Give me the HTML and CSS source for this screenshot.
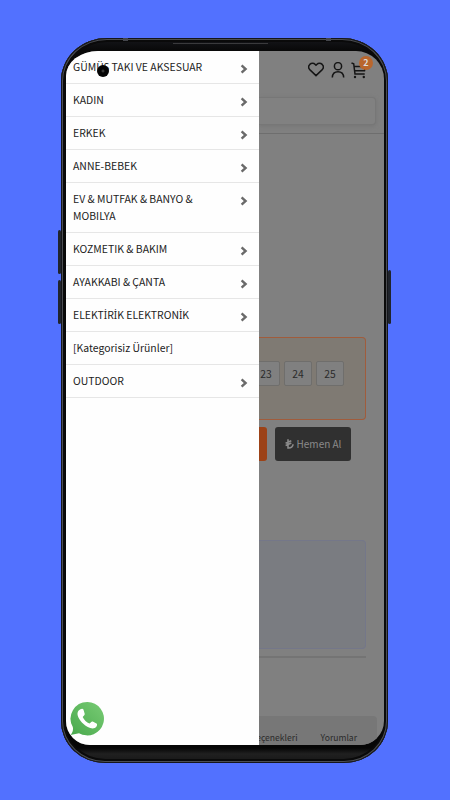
FILE: index.html
```html
<!DOCTYPE html>
<html lang="tr">

<head>
    <meta charset="UTF-8">
    <meta name="viewport" content="width=device-width, initial-scale=1.0">
    <title>Kategoriler</title>
    <link rel="stylesheet" href="styles.css">
</head>

<body>
    <div class="phone">
        <i class="key vol-up"></i>
        <i class="key vol-down"></i>
        <i class="key power"></i>
        <i class="speaker"></i>
        <i class="antenna a1"></i>
        <i class="antenna a2"></i>
        <div class="screen">
            <!-- menü -->
            <ul class="menu">
                <li><span>GÜMÜ<b class="tr">Ş</b> TAKI VE AKSESUAR</span><svg class="arrow" viewBox="0 0 8 10"><path d="M1.6 1.3 5.6 5 1.6 8.7"/></svg></li>
                <li><span>KADIN</span><svg class="arrow" viewBox="0 0 8 10"><path d="M1.6 1.3 5.6 5 1.6 8.7"/></svg></li>
                <li><span>ERKEK</span><svg class="arrow" viewBox="0 0 8 10"><path d="M1.6 1.3 5.6 5 1.6 8.7"/></svg></li>
                <li><span>ANNE-BEBEK</span><svg class="arrow" viewBox="0 0 8 10"><path d="M1.6 1.3 5.6 5 1.6 8.7"/></svg></li>
                <li><span>EV &amp; MUTFAK &amp; BANYO &amp; MOBILYA</span><svg class="arrow" viewBox="0 0 8 10"><path d="M1.6 1.3 5.6 5 1.6 8.7"/></svg></li>
                <li><span>KOZMETIK &amp; BAKIM</span><svg class="arrow" viewBox="0 0 8 10"><path d="M1.6 1.3 5.6 5 1.6 8.7"/></svg></li>
                <li><span>AYAKKABI &amp; ÇANTA</span><svg class="arrow" viewBox="0 0 8 10"><path d="M1.6 1.3 5.6 5 1.6 8.7"/></svg></li>
                <li><span>ELEKT<b class="tr">İ</b>R<b class="tr">İ</b>K ELEKTRON<b class="tr">İ</b>K</span><svg class="arrow" viewBox="0 0 8 10"><path d="M1.6 1.3 5.6 5 1.6 8.7"/></svg></li>
                <li><span>[Kategorisiz Ürünler]</span></li>
                <li><span>OUTDOOR</span><svg class="arrow" viewBox="0 0 8 10"><path d="M1.6 1.3 5.6 5 1.6 8.7"/></svg></li>
            </ul>

            <!-- arkadaki sayfa -->
            <div class="page">
                <div class="header">
                    <div class="icons">
                        <svg width="16" height="15" viewBox="0 0 16 15"><path d="M8 13.6 2 7.9C.4 6.3.4 3.9 1.8 2.4 3.3.9 5.8.9 7.2 2.4L8 3.2 8.8 2.4C10.2.9 12.7.9 14.2 2.4 15.6 3.9 15.6 6.3 14 7.9Z"/></svg>
                        <svg width="14" height="17" viewBox="0 0 14 17"><circle cx="7" cy="4.2" r="3.6"/><path d="M1.3 15.5C1.5 11.8 3.5 9.8 7 9.8S12.500 11.8 12.7 15.5"/></svg>
                        <div class="cart">
                            <svg width="16" height="17" viewBox="0 0 16 17"><path d="M.5 1 2.7 1.7 4 12H13.7M3.2 4.500H14.5L13.5 8.8H3.8"/><circle class="dot" cx="4" cy="15" r="1.2"/><circle class="dot" cx="12.8" cy="15" r="1.2"/></svg>
                            <b class="badge">2</b>
                        </div>
                    </div>
                    <div class="search"></div>
                </div>
                <div class="sizes">
                    <span>23</span>
                    <span>24</span>
                    <span>25</span>
                </div>
                <div class="buttons">
                    <div class="add"></div>
                    <div class="buy">
                        <svg width="9" height="10" viewBox="0 0 9 10"><path d="M3 .3V9C6 9.3 8 7.8 8 5.2M.6 4.2 6.3 1.8M.6 6.5 6.3 4.1"/></svg>
                        Hemen Al
                    </div>
                </div>
                <div class="info"></div>
                <div class="line"></div>
                <div class="tabs">
                    <span>Seçenekleri</span>
                    <span>Yorumlar</span>
                </div>
            </div>

            <i class="camera"></i>
            <svg class="whatsapp" viewBox="0 0 36 36">
                <defs>
                    <linearGradient id="wa" x1="0" y1="1" x2="1" y2="0">
                        <stop offset="0" stop-color="#48a84c"/>
                        <stop offset="1" stop-color="#79cc75"/>
                    </linearGradient>
                </defs>
                <path fill="url(#wa)" d="M18.5 1A16.7 16.7 0 1 1 10 32.2L1.5 34C4 31 4.3 28.5 3.8 26A16.7 16.7 0 0 1 18.5 1Z"/>
                <path fill="#fff" d="M12.5 8C14 7.5 14.5 8.5 14.8 9.7L15.7 12.8C16 14.1 14.3 15 13.7 16 15 19 17.5 21.3 20.5 22.5 21.7 21.8 22.5 20.2 23.7 20.6L27.5 22.4C29 23.3 27.3 26.4 25.7 27.1 22.5 28.5 17.5 26 14 22.5 10.5 19 7.5 14.3 8.8 11 9.5 9.3 11 8.3 12.5 8Z"/>
            </svg>
        </div>
    </div>
</body>

</html>
```
FILE: styles.css
```css
* {
    margin: 0;
    padding: 0;
    box-sizing: border-box;
    list-style: none;
}

body {
    height: 800px;
    overflow: hidden;
    background: #5271ff;
    font-family: "Noto Sans CJK SC", "Noto Sans", sans-serif;
}

/*telefon*/
.phone {
    position: relative;
    width: 327px;
    height: 725px;
    margin: 38px 0 0 61px;
    padding: 13px 4px 18px 5px;
    border-radius: 46px 46px 44px 44px / 43px 43px 42px 42px;
    background: linear-gradient(#16171b, #090909 12px, #060606 710px, #202020 716px, #161616);
    box-shadow: inset 0 0 0 1px #15161a, inset 0 0 0 2px #4b4d52, inset 0 0 0 4px #0a0a0a;
}

.key {
    position: absolute;
    width: 3px;
    background: #20242c;
    border-radius: 2px;
}

.vol-up {
    left: -3px;
    top: 192px;
    height: 44px;
}

.vol-down {
    left: -3px;
    top: 242px;
    height: 44px;
}

.power {
    right: -3px;
    top: 232px;
    height: 54px;
}

.speaker {
    position: absolute;
    left: 112px;
    top: 5px;
    width: 95px;
    height: 1px;
    background: #3a3a3c;
}

.antenna {
    position: absolute;
    width: 5px;
    height: 3px;
    background: #44464c;
}

.a1 {
    left: 62px;
    top: 0;
}

.a2 {
    right: 57px;
    top: 0;
}

.screen {
    position: relative;
    display: flex;
    height: 694px;
    overflow: hidden;
    background: #808080;
    border-radius: 32px 28px 24px 24px / 25px 28px 24px 24px;
}

/*menü*/
.menu {
    flex: none;
    width: 193px;
    background: #fefefe;
}

.menu li {
    display: flex;
    justify-content: space-between;
    padding: 7px 11px 8px 7px;
    border-bottom: 1px solid #e6e6e6;
    font-size: 10.45px;
    line-height: 17px;
    color: #222;
}

.menu span {
    width: 136px;
}

.menu .tr {
    font-family: "Noto Sans", sans-serif;
    font-size: 10px;
    font-weight: normal;
    line-height: 1;
}

.arrow {
    width: 8px;
    height: 10px;
    margin-top: 6px;
    fill: none;
    stroke: #6a6a6a;
    stroke-width: 2.4;
}

/*sayfa*/
.page {
    flex: 1;
    overflow: hidden;
    color: #2b2b2b;
}

.header {
    height: 83px;
    border-bottom: 1px solid #6e6e6e;
}

.icons {
    display: flex;
    gap: 7px;
    padding: 11px 0 0 49px;
}

.icons svg {
    display: block;
    fill: none;
    stroke: #151515;
    stroke-width: 1.5;
}

.icons .dot {
    fill: #151515;
    stroke: none;
}

.cart {
    position: relative;
    margin-left: -1px;
}

.badge {
    position: absolute;
    left: 8px;
    top: -6px;
    width: 14px;
    height: 14px;
    border-radius: 50%;
    background: #b9662d;
    color: #ddd;
    font-size: 9px;
    line-height: 14px;
    text-align: center;
}

.search {
    width: 117px;
    height: 28px;
    margin-top: 18px;
    border: 1px solid #777;
    border-left: 0;
    border-radius: 0 4px 4px 0;
    background: #818181;
    box-shadow: 0 1px 4px #747474;
}

.sizes {
    display: flex;
    gap: 4px;
    width: 107px;
    height: 83px;
    margin-top: 203px;
    padding-top: 23px;
    border: 1px solid #a05c3c;
    border-left: 0;
    border-radius: 0 4px 4px 0;
    background: #7f7a73;
}

.sizes span {
    flex: none;
    width: 28px;
    height: 25px;
    border: 1px solid #6f6e6c;
    border-radius: 2px;
    background: #808080;
    font-size: 10.3px;
    line-height: 23px;
    text-align: center;
}

.sizes span:first-child {
    margin-left: -7px;
}

.buttons {
    display: flex;
    gap: 8px;
    margin-top: 7px;
}

.add {
    width: 8px;
    height: 34px;
    border-radius: 0 3px 3px 0;
    background: #9c4217;
}

.buy {
    display: flex;
    align-items: center;
    justify-content: center;
    gap: 3px;
    width: 76px;
    height: 34px;
    padding-bottom: 1px;
    border-radius: 3px;
    background: #303030;
    color: #8b8b8b;
    font-size: 10px;
}

.buy svg {
    fill: none;
    stroke: #8b8b8b;
    stroke-width: 1.6;
}

.info {
    width: 107px;
    height: 109px;
    margin-top: 79px;
    border: 1px solid #747789;
    border-left: 0;
    border-radius: 0 4px 4px 0;
    background: #7a7c81;
}

.line {
    width: 107px;
    height: 2px;
    margin-top: 7px;
    background: #747474;
}

.tabs {
    display: flex;
    justify-content: flex-end;
    gap: 23px;
    width: 118px;
    height: 29px;
    margin-top: 58px;
    padding: 12px 20px 0 0;
    border-radius: 0 4px 0 0;
    background: #777;
    font-size: 8.6px;
    line-height: 18px;
    white-space: nowrap;
}

/*kamera deliği*/
.camera {
    position: absolute;
    left: 31px;
    top: 14px;
    width: 12px;
    height: 12px;
    border-radius: 50%;
    background: radial-gradient(circle, #555 0, #050505 2px);
}

.whatsapp {
    position: absolute;
    left: 3px;
    top: 650px;
    width: 36px;
    height: 36px;
}
```
